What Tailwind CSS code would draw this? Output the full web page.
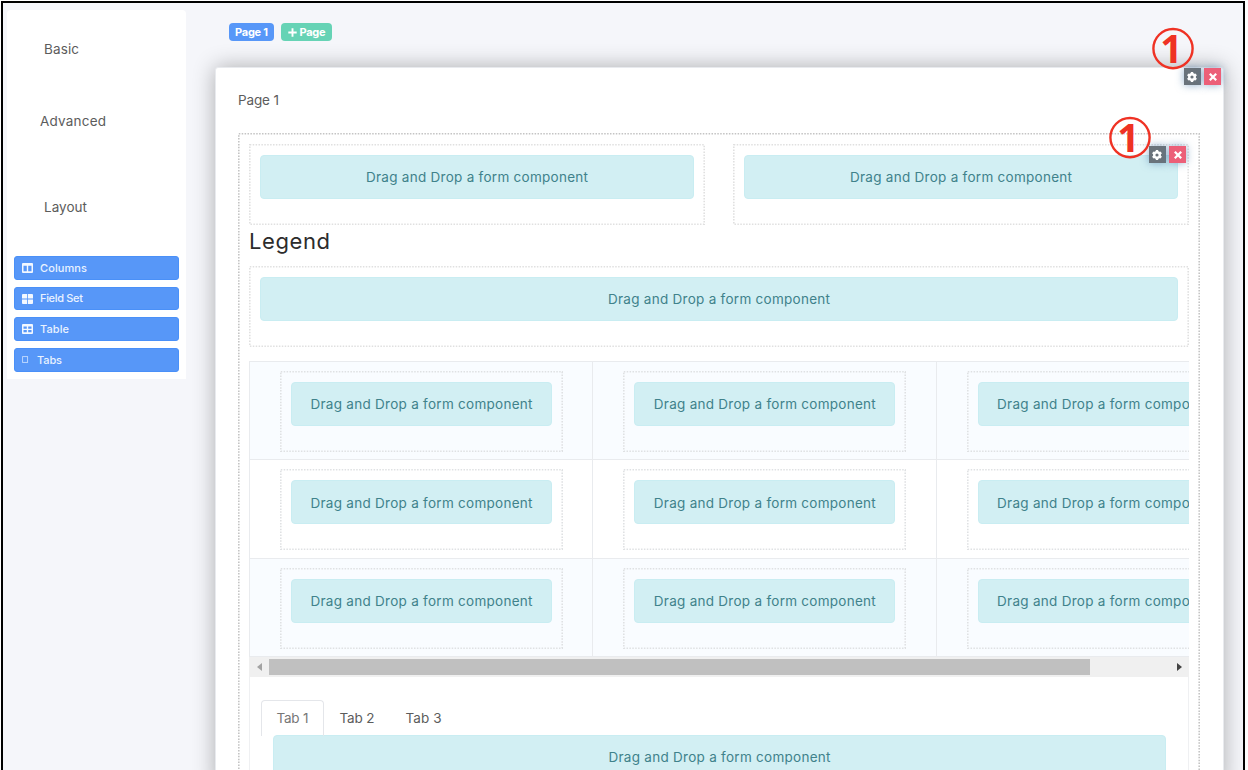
<!DOCTYPE html>
<html lang="en">
<head>
<meta charset="utf-8">
<title>Form builder</title>
<script src="https://cdn.jsdelivr.net/npm/@tailwindcss/browser@4"></script>
</head>
<body class="bg-white font-[Inter,sans-serif] text-[#5c5c5c]">
<div class="relative h-[770px] w-[1248px] overflow-hidden pt-px pl-px">
  <div class="flex h-[780px] w-[1244px] items-start border-2 border-black bg-[#f5f6fa]">
    <aside class="mt-[7px] ml-[4px] h-[369px] w-[179px] shrink-0 rounded-t-[4px] bg-white pl-[7px] text-[13.5px]">
      <div class="h-[72px] pt-[29px] pl-[30px] leading-[20px]"><span class="fit" data-w="35">Basic</span></div>
      <div class="h-[86px] pt-[29px] pl-[26px] leading-[20px]"><span class="fit" data-w="66">Advanced</span></div>
      <div class="h-[88px] pt-[29px] pl-[30px] leading-[20px]"><span class="fit" data-w="43">Layout</span></div>
      <div class="flex flex-col gap-[7px] text-[11px] font-medium text-[#e9f2ff]">
        <div class="flex h-[23.7px] w-[165px] items-center rounded-[3px] border border-[#4a90f8] bg-[#5797f8] pl-[7px]">
          <svg class="mr-[7px] h-[10px] w-[11px]" viewBox="0 0 11 9" preserveAspectRatio="none"><path fill="#f3f8ff" fill-rule="evenodd" d="M1 0h9q1 0 1 1v7q0 1-1 1H1q-1 0-1-1V1q0-1 1-1zM1.5 2.4v5.1h3.3V2.4zM6.2 2.4v5.1h3.3V2.4z"/></svg>
          <span class="fit" data-w="47">Columns</span></div>
        <div class="flex h-[23.7px] w-[165px] items-center rounded-[3px] border border-[#4a90f8] bg-[#5797f8] pl-[7px]">
          <svg class="mr-[7px] h-[10px] w-[11px]" viewBox="0 0 11 9" preserveAspectRatio="none"><path fill="#f3f8ff" d="M.6 0H5.1v4.1H0V.6zM5.9 0h4.5l.6.6v3.5H5.9zM0 4.9h5.1V9H.6L0 8.4zM5.9 4.9H11v3.5l-.6.6H5.9z"/></svg>
          <span class="fit" data-w="43">Field Set</span></div>
        <div class="flex h-[23.7px] w-[165px] items-center rounded-[3px] border border-[#4a90f8] bg-[#5797f8] pl-[7px]">
          <svg class="mr-[7px] h-[10px] w-[11px]" viewBox="0 0 11 9" preserveAspectRatio="none"><path fill="#f3f8ff" fill-rule="evenodd" d="M1 0h9q1 0 1 1v7q0 1-1 1H1q-1 0-1-1V1q0-1 1-1zM1.5 2.2v2h3.3v-2zM6.2 2.2v2h3.3v-2zM1.5 5.5v2h3.3v-2zM6.2 5.5v2h3.3v-2z"/></svg>
          <span class="fit" data-w="29">Table</span></div>
        <div class="flex h-[23.7px] w-[165px] items-center rounded-[3px] border border-[#4a90f8] bg-[#5797f8] pl-[7px]">
          <svg class="mr-[8px] h-[7px] w-[7px]" viewBox="0 0 7 7"><rect x=".6" y=".6" width="5" height="5.8" fill="none" stroke="#c5dcff" stroke-width=".9"/></svg>
          <span class="fit" data-w="25">Tabs</span></div>
      </div>
    </aside>

    <main class="ml-[29px] w-[1009px] shrink-0">
      <div class="flex h-[64px] gap-[7px] pt-[20px] pl-[14px] text-[11px] font-bold text-white">
        <span class="flex h-[18px] w-[45px] items-center justify-center rounded-[4px] bg-[#5797f8]"><span class="fit" data-w="33">Page 1</span></span>
        <span class="flex h-[18px] w-[51px] items-center justify-center gap-[3px] rounded-[4px] bg-[#66d3b5]">
          <svg class="h-[9px] w-[9px]" viewBox="0 0 9 9"><path d="M4.5.3v8.4M.3 4.5h8.4" stroke="#fff" stroke-width="1.9"/></svg><span class="fit" data-w="26">Page</span></span>
      </div>

      <section class="h-[720px] w-[1009px] rounded-t-[3px] border border-[#e8eaee] bg-white px-[22px] pt-[22px] shadow-[0_0_22px_rgba(0,0,0,.3)]">
        <div class="h-[43px] text-[13.5px] leading-[20px]"><span class="fit" data-w="41">Page 1</span></div>
        <div data-dots="#c4c4c4" class="relative h-[700px] w-[962px] px-[11px] pt-[11px]">
          <div class="flex h-[81px] justify-between">
            <div data-dots="#e0e0e0" class="relative h-[81px] w-[456px] p-[11px]"><div data-drop></div></div>
            <div data-dots="#e0e0e0" class="relative h-[81px] w-[456px] p-[11px]"><div data-drop></div></div>
          </div>
          <h2 class="h-[41px] text-[22px] leading-[32px] text-[#2c2c2c]"><span class="fit" data-w="81">Legend</span></h2>
          <div data-dots="#e0e0e0" class="relative h-[81px] w-[940px] p-[11px]"><div data-drop></div></div>

          <div class="mt-[14px] h-[296px] overflow-hidden border-t border-l border-[#e9ebee]">
            <div id="grid" class="grid w-[1030px] grid-cols-[343.3px_343.3px_343.3px]"></div>
          </div>
          <div class="flex h-[20px] items-center bg-[#f0f0f0]">
            <svg class="mr-[7px] ml-[8px] h-[8px] w-[5px]" viewBox="0 0 5 8"><path d="M5 0v8L0 4z" fill="#a3a3a3"/></svg>
            <div class="h-[16px] w-[821px] bg-[#c0c0c0]"></div>
            <svg class="ml-[87px] h-[8px] w-[5px]" viewBox="0 0 5 8"><path d="M0 0v8L5 4z" fill="#444"/></svg>
          </div>
          <div class="h-[120px] w-[940px] border-x border-[#eff0f2] px-[11px] pt-[23px]">
            <div class="flex h-[36px] text-[13.5px]">
              <div class="flex h-[36px] w-[63px] items-center justify-center rounded-t-[4px] border border-b-0 border-[#e4e6ea] text-[#777]"><span class="fit" data-w="32">Tab 1</span></div>
              <div class="flex w-[66px] items-center justify-center"><span class="fit" data-w="35">Tab 2</span></div>
              <div class="flex w-[67px] items-center justify-center"><span class="fit" data-w="36">Tab 3</span></div>
            </div>
            <div class="-mt-px ml-[12px] w-[893px]"><div data-drop></div></div>
          </div>
        </div>
      </section>
    </main>
  </div>

  <div class="absolute top-[68px] left-[1183.5px] flex gap-[3.5px]" data-tools></div>
  <div class="absolute top-[146px] left-[1148.5px] flex gap-[3.5px]" data-tools></div>
  <svg class="absolute top-[27px] left-[1151px] h-[44px] w-[44px]" viewBox="0 0 44 44"><circle cx="22" cy="21.6" r="19.6" fill="none" stroke="#ef3224" stroke-width="2.4"/><text x="20.5" y="35.6" text-anchor="middle" font-family="Open Sans" font-weight="700" font-size="39" fill="#ef3224">1</text></svg>
  <svg class="absolute top-[116px] left-[1108px] h-[44px] w-[44px]" viewBox="0 0 44 44"><circle cx="22" cy="21.6" r="19.6" fill="none" stroke="#ef3224" stroke-width="2.4"/><text x="20.5" y="35.6" text-anchor="middle" font-family="Open Sans" font-weight="700" font-size="39" fill="#ef3224">1</text></svg>
</div>
<script>
// Table cells
document.getElementById('grid').innerHTML = Array.from({length: 9}, (_, i) =>
  `<div class="${Math.floor(i / 3) % 2 ? 'bg-white' : 'bg-[#f9fcff]'} h-[98.3px] border-r border-b border-[#e9ebee] pt-[9px] pl-[30px]"><div data-dots="#dfe1e3" class="relative h-[81px] w-[283px] p-[11px]"><div data-drop></div></div></div>`).join('');
// Drop targets
document.querySelectorAll('[data-drop]').forEach(e => {
  e.innerHTML = '<div class="flex h-[44px] items-center justify-center rounded-[4px] border border-[#c9edf2] bg-[#d2eff3] pt-px text-[13.5px] whitespace-nowrap text-[#40828b]"><span class="fit" data-w="222">Drag and Drop a form component</span></div>';
});
// Edit and remove buttons
document.querySelectorAll('[data-tools]').forEach(e => {
  e.innerHTML = `<span class="flex h-[17px] w-[17px] items-center justify-center bg-[#6a737b] shadow-[0_0_8px_rgba(70,120,170,.6)]"><svg class="h-[10px] w-[10px]" viewBox="0 0 10 10"><circle cx="5" cy="5" r="2.8" fill="none" stroke="#fff" stroke-width="2.4"/><path d="M5 0v2M5 8v2M.7 2.5l1.7 1M7.6 6.5l1.7 1M.7 7.5l1.7-1M7.6 3.5l1.7-1" stroke="#fff" stroke-width="2.4"/></svg></span><span class="flex h-[17px] w-[17px] items-center justify-center bg-[#ec5f78] shadow-[0_0_8px_rgba(70,120,170,.6)]"><svg class="h-[8px] w-[8px]" viewBox="0 0 7 7"><path d="M.7.7l5.6 5.6M6.3.7L.7 6.3" stroke="#fff" stroke-width="2"/></svg></span>`;
});
// Dotted outlines with a 2.9px pitch
document.querySelectorAll('[data-dots]').forEach(e => {
  e.insertAdjacentHTML('afterbegin', `<svg class="pointer-events-none absolute inset-0 h-full w-full"><rect x=".8" y=".8" class="h-[calc(100%-1.6px)] w-[calc(100%-1.6px)]" fill="none" stroke="${e.dataset.dots}" stroke-width="1.6" stroke-dasharray="1.5 1.4"/></svg>`);
});
// Track each label out to its set width
function fit() {
  document.querySelectorAll('.fit').forEach(e => {
    e.style.letterSpacing = e.style.marginRight = '0px';
    const s = (e.dataset.w - e.getBoundingClientRect().width) / (e.textContent.length - 1);
    e.style.letterSpacing = s + 'px';
    e.style.marginRight = -s + 'px';
  });
}
window.addEventListener('load', () => { fit(); requestAnimationFrame(fit); });
</script>
</body>
</html>
